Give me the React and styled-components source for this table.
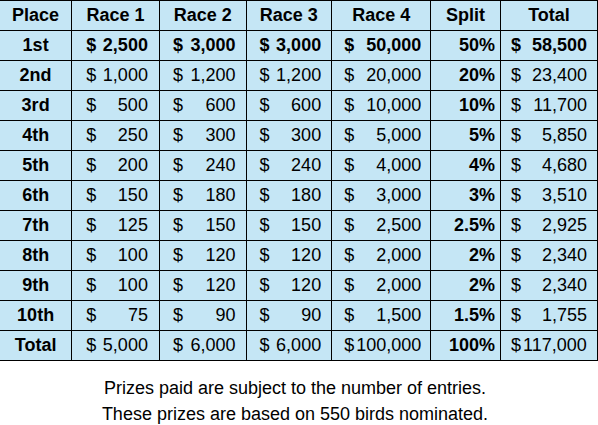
import React from 'react';
import styled, { createGlobalStyle } from 'styled-components';

const GlobalStyle = createGlobalStyle`
  html, body {
    margin: 0;
    padding: 0;
    background: #ffffff;
  }
  body {
    font-family: 'Liberation Sans', Arial, sans-serif;
    color: #000;
    overflow: hidden;
  }
`;

const rows = [
  { place: '1st', r: [2500, 3000, 3000, 50000], split: '50%', total: 58500, strong: true },
  { place: '2nd', r: [1000, 1200, 1200, 20000], split: '20%', total: 23400 },
  { place: '3rd', r: [500, 600, 600, 10000], split: '10%', total: 11700 },
  { place: '4th', r: [250, 300, 300, 5000], split: '5%', total: 5850 },
  { place: '5th', r: [200, 240, 240, 4000], split: '4%', total: 4680 },
  { place: '6th', r: [150, 180, 180, 3000], split: '3%', total: 3510 },
  { place: '7th', r: [125, 150, 150, 2500], split: '2.5%', total: 2925 },
  { place: '8th', r: [100, 120, 120, 2000], split: '2%', total: 2340 },
  { place: '9th', r: [100, 120, 120, 2000], split: '2%', total: 2340 },
  { place: '10th', r: [75, 90, 90, 1500], split: '1.5%', total: 1755 },
];

const totals = { r: [5000, 6000, 6000, 100000], split: '100%', total: 117000 };

const fmt = (n) => n.toLocaleString('en-US');

const Page = styled.div`
  width: 598px;
  height: 425px;
  overflow: hidden;
`;

const Table = styled.table`
  border-collapse: collapse;
  table-layout: fixed;
  margin: 0 0 0 -1px;
  background: #c5e6f5;
  font-size: 18px;
`;

const Row = styled.tr`
  height: 30px;
`;

const Head = styled.th`
  border: 1px solid #000;
  font-weight: bold;
  text-align: center;
  padding: 0;
`;

const PlaceCell = styled.td`
  border: 1px solid #000;
  font-weight: bold;
  text-align: center;
  padding: 0;
`;

const SplitCell = styled.td`
  border: 1px solid #000;
  font-weight: bold;
  text-align: right;
  padding: 0 5px 0 0;
`;

const MoneyCell = styled.td`
  border: 1px solid #000;
  padding: 0 ${(p) => p.$pr}px 0 ${(p) => p.$pl}px;
  font-weight: ${(p) => (p.$bold ? 'bold' : 'normal')};
`;

const Money = styled.div`
  display: flex;
  gap: 2px;
  justify-content: ${(p) => (p.$tight ? 'flex-start' : 'space-between')};
`;

const Note = styled.div`
  padding: 14px 8px 0 0;
  text-align: center;
  font-size: 18px;
  line-height: 26px;
`;

const pads = [
  [14, 11],
  [13, 10],
  [13, 10],
  [12, 9],
];

const Amount = ({ value, bold, pl, pr }) => {
  const text = fmt(value);
  const tight = text.length >= 7;
  return (
    <MoneyCell $bold={bold} $pl={pl} $pr={pr}>
      <Money $tight={tight}>
        <span>$</span>
        <span>{text}</span>
      </Money>
    </MoneyCell>
  );
};

const App = () => (
  <Page>
    <GlobalStyle />
    <Table>
      <colgroup>
        <col style={{ width: 74 }} />
        <col style={{ width: 88 }} />
        <col style={{ width: 87 }} />
        <col style={{ width: 86 }} />
        <col style={{ width: 96 }} />
        <col style={{ width: 71 }} />
        <col style={{ width: 97 }} />
      </colgroup>
      <thead>
        <Row>
          <Head>Place</Head>
          <Head>Race 1</Head>
          <Head>Race 2</Head>
          <Head>Race 3</Head>
          <Head>Race 4</Head>
          <Head>Split</Head>
          <Head>Total</Head>
        </Row>
      </thead>
      <tbody>
        {rows.map((row) => (
          <Row key={row.place}>
            <PlaceCell>{row.place}</PlaceCell>
            {row.r.map((v, i) => (
              <Amount key={i} value={v} bold={row.strong} pl={pads[i][0]} pr={pads[i][1]} />
            ))}
            <SplitCell>{row.split}</SplitCell>
            <Amount value={row.total} bold={row.strong} pl={10} pr={10} />
          </Row>
        ))}
        <Row>
          <PlaceCell>Total</PlaceCell>
          {totals.r.map((v, i) => (
            <Amount key={i} value={v} pl={pads[i][0]} pr={pads[i][1]} />
          ))}
          <SplitCell>{totals.split}</SplitCell>
          <Amount value={totals.total} pl={10} pr={10} />
        </Row>
      </tbody>
    </Table>
    <Note>
      Prizes paid are subject to the number of entries.
      <br />
      These prizes are based on 550 birds nominated.
    </Note>
  </Page>
);

export default App;
